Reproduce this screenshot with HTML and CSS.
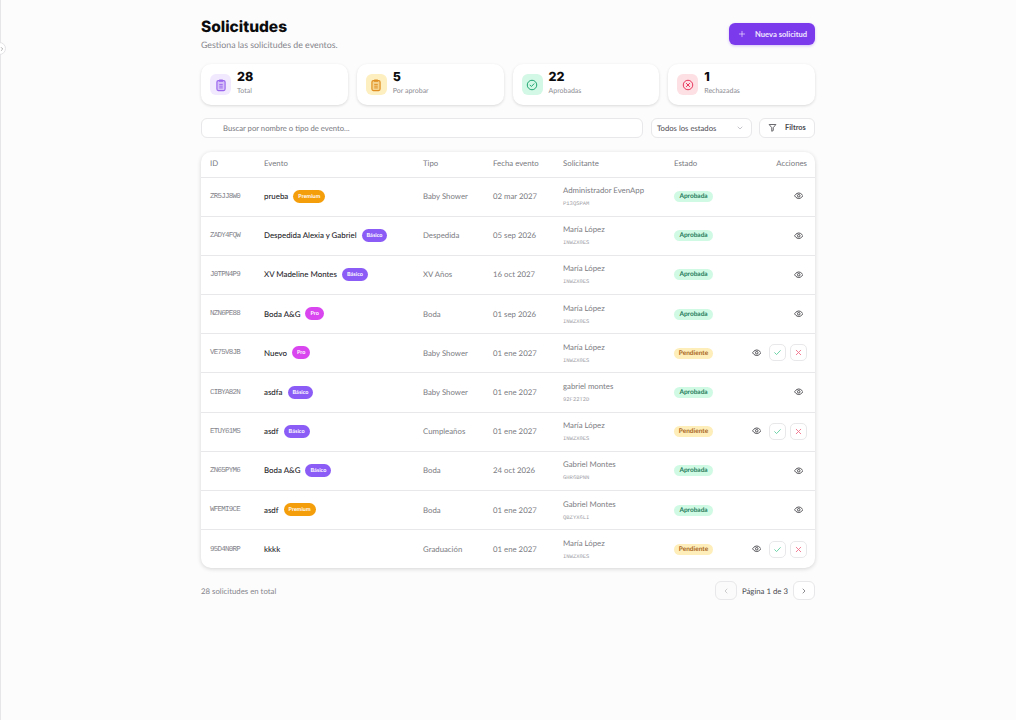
FILE: index.html
```html
<!DOCTYPE html>
<html lang="es">
<head>
    <meta charset="UTF-8">
    <meta name="viewport" content="width=device-width, initial-scale=1.0">
    <title>Solicitudes</title>
    <link rel="stylesheet" href="styles.css">
</head>
<body>
    <svg class="sprites" width="0" height="0" aria-hidden="true">
        <symbol id="i-clipboard" viewBox="0 0 24 24">
            <rect x="5" y="4.500" width="14" height="17" rx="2.500" fill="currentColor" fill-opacity=".3" stroke="currentColor" stroke-width="2"/>
            <rect x="8.500" y="2.500" width="7" height="4" rx="1" fill="currentColor"/>
            <path d="M9 11h6M9 14h6M9 17h6" fill="none" stroke="currentColor" stroke-width="1.600"/>
        </symbol>
        <symbol id="i-check-circle" viewBox="0 0 24 24">
            <circle cx="12" cy="12" r="9.500" fill="none" stroke="currentColor" stroke-width="2"/>
            <path d="M8 12.200l2.800 2.800L16 9.600" fill="none" stroke="currentColor" stroke-width="2" stroke-linecap="round" stroke-linejoin="round"/>
        </symbol>
        <symbol id="i-x-circle" viewBox="0 0 24 24">
            <circle cx="12" cy="12" r="9.500" fill="none" stroke="currentColor" stroke-width="2"/>
            <path d="M8.800 8.800l6.400 6.400M15.200 8.800l-6.400 6.400" fill="none" stroke="currentColor" stroke-width="2" stroke-linecap="round"/>
        </symbol>
        <symbol id="i-eye" viewBox="0 0 24 24">
            <path d="M1.500 12S5.500 5 12 5s10.500 7 10.500 7-4 7-10.500 7S1.500 12 1.500 12z" fill="none" stroke="currentColor" stroke-width="2.400" stroke-linejoin="round"/>
            <circle cx="12" cy="12" r="3.200" fill="none" stroke="currentColor" stroke-width="2.400"/>
        </symbol>
        <symbol id="i-check" viewBox="0 0 24 24">
            <path d="M4.500 12.500l5 5L19.500 7" fill="none" stroke="currentColor" stroke-width="2.400" stroke-linecap="round" stroke-linejoin="round"/>
        </symbol>
        <symbol id="i-x" viewBox="0 0 24 24">
            <path d="M6 6l12 12M18 6L6 18" fill="none" stroke="currentColor" stroke-width="2.400" stroke-linecap="round"/>
        </symbol>
        <symbol id="i-plus" viewBox="0 0 24 24">
            <path d="M12 4v16M4 12h16" fill="none" stroke="currentColor" stroke-width="2" stroke-linecap="round"/>
        </symbol>
        <symbol id="i-filter" viewBox="0 0 24 24">
            <path d="M3 4h18l-7 8.500V20l-4 2v-9.500z" fill="none" stroke="currentColor" stroke-width="2.200" stroke-linejoin="round"/>
        </symbol>
        <symbol id="i-down" viewBox="0 0 24 24">
            <path d="M6 9l6 6 6-6" fill="none" stroke="currentColor" stroke-width="2" stroke-linecap="round" stroke-linejoin="round"/>
        </symbol>
        <symbol id="i-left" viewBox="0 0 24 24">
            <path d="M15 6l-6 6 6 6" fill="none" stroke="currentColor" stroke-width="2" stroke-linecap="round" stroke-linejoin="round"/>
        </symbol>
        <symbol id="i-right" viewBox="0 0 24 24">
            <path d="M9 6l6 6-6 6" fill="none" stroke="currentColor" stroke-width="2" stroke-linecap="round" stroke-linejoin="round"/>
        </symbol>
    </svg>

    <div class="sidebar-edge">
        <button class="collapse-btn" type="button" aria-label="Expandir menú">
            <svg class="icon-collapse"><use href="#i-right"/></svg>
        </button>
    </div>

    <main class="page">
        <header class="page-head">
            <div>
                <h1>Solicitudes</h1>
                <p class="subtitle">Gestiona las solicitudes de eventos.</p>
            </div>
            <button class="btn-primary" type="button">
                <svg class="icon-plus"><use href="#i-plus"/></svg>
                Nueva solicitud
            </button>
        </header>

        <section class="stats">
            <div class="stat-card">
                <div class="stat-icon purple"><svg><use href="#i-clipboard"/></svg></div>
                <div><div class="stat-value">28</div><div class="stat-label">Total</div></div>
            </div>
            <div class="stat-card">
                <div class="stat-icon amber"><svg><use href="#i-clipboard"/></svg></div>
                <div><div class="stat-value">5</div><div class="stat-label">Por aprobar</div></div>
            </div>
            <div class="stat-card">
                <div class="stat-icon green"><svg><use href="#i-check-circle"/></svg></div>
                <div><div class="stat-value">22</div><div class="stat-label">Aprobadas</div></div>
            </div>
            <div class="stat-card">
                <div class="stat-icon red"><svg><use href="#i-x-circle"/></svg></div>
                <div><div class="stat-value">1</div><div class="stat-label">Rechazadas</div></div>
            </div>
        </section>

        <section class="toolbar">
            <div class="search">Buscar por nombre o tipo de evento...</div>
            <div class="select">Todos los estados <svg class="icon-down"><use href="#i-down"/></svg></div>
            <button class="btn-filter" type="button"><svg class="icon-filter"><use href="#i-filter"/></svg> Filtros</button>
        </section>

        <section class="table-card">
            <table>
                <colgroup>
                    <col class="c-id"><col class="c-event"><col class="c-type"><col class="c-date"><col class="c-user"><col class="c-status"><col class="c-actions">
                </colgroup>
                <thead>
                    <tr><th>ID</th><th>Evento</th><th>Tipo</th><th>Fecha evento</th><th>Solicitante</th><th>Estado</th><th class="right">Acciones</th></tr>
                </thead>
                <tbody>
                    <tr>
                        <td class="mono">ZR5JJ8W0</td>
                        <td><div class="event-row"><span class="event">prueba</span><span class="plan premium">Premium</span></div></td>
                        <td>Baby Shower</td><td>02 mar 2027</td>
                        <td><div class="user-name">Administrador EvenApp</div><div class="user-id">P13QSPAM</div></td>
                        <td><span class="status ok">Aprobada</span></td>
                        <td><div class="actions"><span class="act-eye"><svg><use href="#i-eye"/></svg></span></div></td>
                    </tr>
                    <tr>
                        <td class="mono">ZADY4FQW</td>
                        <td><div class="event-row"><span class="event">Despedida Alexia y Gabriel</span><span class="plan basico">Básico</span></div></td>
                        <td>Despedida</td><td>05 sep 2026</td>
                        <td><div class="user-name">María López</div><div class="user-id">INWZX0ES</div></td>
                        <td><span class="status ok">Aprobada</span></td>
                        <td><div class="actions"><span class="act-eye"><svg><use href="#i-eye"/></svg></span></div></td>
                    </tr>
                    <tr>
                        <td class="mono">J0TPN4P9</td>
                        <td><div class="event-row"><span class="event">XV Madeline Montes</span><span class="plan basico">Básico</span></div></td>
                        <td>XV Años</td><td>16 oct 2027</td>
                        <td><div class="user-name">María López</div><div class="user-id">INWZX0ES</div></td>
                        <td><span class="status ok">Aprobada</span></td>
                        <td><div class="actions"><span class="act-eye"><svg><use href="#i-eye"/></svg></span></div></td>
                    </tr>
                    <tr>
                        <td class="mono">NZN6PE88</td>
                        <td><div class="event-row"><span class="event">Boda A&amp;G</span><span class="plan pro">Pro</span></div></td>
                        <td>Boda</td><td>01 sep 2026</td>
                        <td><div class="user-name">María López</div><div class="user-id">INWZX0ES</div></td>
                        <td><span class="status ok">Aprobada</span></td>
                        <td><div class="actions"><span class="act-eye"><svg><use href="#i-eye"/></svg></span></div></td>
                    </tr>
                    <tr>
                        <td class="mono">VE75V8JB</td>
                        <td><div class="event-row"><span class="event">Nuevo</span><span class="plan pro">Pro</span></div></td>
                        <td>Baby Shower</td><td>01 ene 2027</td>
                        <td><div class="user-name">María López</div><div class="user-id">INWZX0ES</div></td>
                        <td><span class="status wait">Pendiente</span></td>
                        <td><div class="actions"><span class="act-eye"><svg><use href="#i-eye"/></svg></span><span class="act-btn yes"><svg><use href="#i-check"/></svg></span><span class="act-btn no"><svg><use href="#i-x"/></svg></span></div></td>
                    </tr>
                    <tr>
                        <td class="mono">CIBYA82N</td>
                        <td><div class="event-row"><span class="event">asdfa</span><span class="plan basico">Básico</span></div></td>
                        <td>Baby Shower</td><td>01 ene 2027</td>
                        <td><div class="user-name">gabriel montes</div><div class="user-id">92F22T2D</div></td>
                        <td><span class="status ok">Aprobada</span></td>
                        <td><div class="actions"><span class="act-eye"><svg><use href="#i-eye"/></svg></span></div></td>
                    </tr>
                    <tr>
                        <td class="mono">ETUY61MS</td>
                        <td><div class="event-row"><span class="event">asdf</span><span class="plan basico">Básico</span></div></td>
                        <td>Cumpleaños</td><td>01 ene 2027</td>
                        <td><div class="user-name">María López</div><div class="user-id">INWZX0ES</div></td>
                        <td><span class="status wait">Pendiente</span></td>
                        <td><div class="actions"><span class="act-eye"><svg><use href="#i-eye"/></svg></span><span class="act-btn yes"><svg><use href="#i-check"/></svg></span><span class="act-btn no"><svg><use href="#i-x"/></svg></span></div></td>
                    </tr>
                    <tr>
                        <td class="mono">ZN65PYM6</td>
                        <td><div class="event-row"><span class="event">Boda A&amp;G</span><span class="plan basico">Básico</span></div></td>
                        <td>Boda</td><td>24 oct 2026</td>
                        <td><div class="user-name">Gabriel Montes</div><div class="user-id">GHR6BPNN</div></td>
                        <td><span class="status ok">Aprobada</span></td>
                        <td><div class="actions"><span class="act-eye"><svg><use href="#i-eye"/></svg></span></div></td>
                    </tr>
                    <tr>
                        <td class="mono">WFEMI9CE</td>
                        <td><div class="event-row"><span class="event">asdf</span><span class="plan premium">Premium</span></div></td>
                        <td>Boda</td><td>01 ene 2027</td>
                        <td><div class="user-name">Gabriel Montes</div><div class="user-id">QBZYX6LI</div></td>
                        <td><span class="status ok">Aprobada</span></td>
                        <td><div class="actions"><span class="act-eye"><svg><use href="#i-eye"/></svg></span></div></td>
                    </tr>
                    <tr>
                        <td class="mono">95D4N0RP</td>
                        <td><div class="event-row"><span class="event">kkkk</span></div></td>
                        <td>Graduación</td><td>01 ene 2027</td>
                        <td><div class="user-name">María López</div><div class="user-id">INWZX0ES</div></td>
                        <td><span class="status wait">Pendiente</span></td>
                        <td><div class="actions"><span class="act-eye"><svg><use href="#i-eye"/></svg></span><span class="act-btn yes"><svg><use href="#i-check"/></svg></span><span class="act-btn no"><svg><use href="#i-x"/></svg></span></div></td>
                    </tr>
                </tbody>
            </table>
        </section>

        <footer class="table-foot">
            <span>28 solicitudes en total</span>
            <div class="pager">
                <span class="page-btn off"><svg><use href="#i-left"/></svg></span>
                <span class="page-text">Página 1 de 3</span>
                <span class="page-btn"><svg><use href="#i-right"/></svg></span>
            </div>
        </footer>
    </main>
</body>
</html>
```

FILE: styles.css
```css
* {
    box-sizing: border-box;
}
body {
    margin: 0;
    min-height: 720px;
    background-color: #fcfcfc;
    font-family: "Lato", "Noto Sans", sans-serif;
    color: #1f2023;
    text-rendering: geometricPrecision;
}
.sprites {
    position: absolute;
}
.sidebar-edge {
    position: fixed;
    top: 0;
    bottom: 0;
    left: 0;
    width: 1px;
    background-color: #e6e6e8;
}
.collapse-btn {
    position: absolute;
    top: 42px;
    left: -7px;
    width: 13px;
    height: 13px;
    padding: 0;
    display: flex;
    align-items: center;
    justify-content: flex-end;
    background-color: #fff;
    border: 1px solid #e3e3e6;
    border-radius: 50%;
}
.icon-collapse {
    width: 6px;
    height: 6px;
    color: #666;
}
.page {
    width: 614px;
    margin: 0 auto;
    padding-top: 17px;
}

/* header */
.page-head {
    display: flex;
    justify-content: space-between;
    align-items: flex-start;
    height: 47px;
}
h1 {
    margin: 0;
    font-family: "Inter", sans-serif;
    font-size: 15.500px;
    line-height: 19px;
    font-weight: 800;
    color: #0c0c0f;
}
.subtitle {
    margin: 2px 0 0;
    font-size: 8.800px;
    line-height: 13px;
    color: #85858c;
}
.btn-primary {
    margin-top: 6px;
    width: 86px;
    height: 22px;
    display: flex;
    align-items: center;
    padding: 0 0 0 9px;
    background-color: #7c3aed;
    color: #f1e9ff;
    border: none;
    border-radius: 6px;
    font-family: inherit;
    font-size: 7.600px;
    font-weight: 700;
    white-space: nowrap;
    box-shadow: 0 1px 3px rgba(124, 58, 237, .3);
}
.icon-plus {
    width: 8px;
    height: 8px;
    margin-right: 9px;
}

/* stat cards */
.stats {
    display: flex;
    gap: 9px;
}
.stat-card {
    flex: 1;
    height: 41px;
    display: flex;
    align-items: center;
    gap: 6px;
    padding-left: 9px;
    background-color: #fff;
    border-radius: 10px;
    box-shadow: 0 1px 3px rgba(0, 0, 0, .14);
}
.stat-icon {
    width: 21px;
    height: 21px;
    display: flex;
    align-items: center;
    justify-content: center;
    border-radius: 6px;
}
.stat-icon svg {
    width: 12px;
    height: 12px;
}
.stat-icon.purple svg,
.stat-icon.amber svg {
    width: 14px;
    height: 14px;
}
.purple {
    background-color: #f1e9fe;
    color: #9a66ee;
}
.amber {
    background-color: #fdefbf;
    color: #e08f22;
}
.green {
    background-color: #d3f8e5;
    color: #22a673;
}
.red {
    background-color: #fde0e4;
    color: #e8365d;
}
.stat-value {
    font-family: "Inter", sans-serif;
    font-size: 12.500px;
    line-height: 14px;
    font-weight: 800;
    color: #0c0c0f;
    margin-top: -2px;
}
.stat-label {
    margin-top: 2px;
    font-size: 7px;
    line-height: 9px;
    color: #8c8c93;
}

/* search and filters */
.toolbar {
    display: flex;
    gap: 7.500px;
    margin-top: 13px;
    height: 20px;
}
.search,
.select,
.btn-filter {
    height: 20px;
    display: flex;
    align-items: center;
    background-color: #fff;
    border: 1px solid #e8e8ea;
    border-radius: 6px;
    font-family: inherit;
    font-size: 7.700px;
}
.search {
    flex: 1;
    padding-left: 21px;
    color: #77777e;
}
.select {
    width: 101px;
    flex: none;
    padding: 0 7px 1px 5.500px;
    justify-content: space-between;
    color: #4a4a50;
}
.icon-down {
    width: 8px;
    height: 8px;
    color: #a9a9af;
}
.btn-filter {
    width: 56px;
    flex: none;
    padding: 0 0 1px 8px;
    gap: 8px;
    color: #4a4a50;
    font-size: 7.400px;
    font-weight: 700;
}
.icon-filter {
    width: 9px;
    height: 9px;
    color: #4a4a50;
}

/* table */
.table-card {
    margin-top: 14px;
    height: 416px;
    background-color: #fff;
    border-radius: 10px;
    box-shadow: 0 1px 4px rgba(0, 0, 0, .16);
    overflow: hidden;
}
table {
    width: 100%;
    border-collapse: collapse;
    table-layout: fixed;
    font-size: 7.800px;
}
.c-id { width: 54px; }
.c-event { width: 159px; }
.c-type { width: 70px; }
.c-date { width: 70px; }
.c-user { width: 111px; }
.c-status { width: 60px; }
th {
    height: 25px;
    padding: 0 8px 2px 9px;
    text-align: left;
    font-weight: 400;
    color: #77777e;
    border-bottom: 1px solid #e8e8ea;
}
th.right {
    text-align: right;
}
td {
    height: 39.200px;
    padding: 0 8px 1px 9px;
    color: #7b7b82;
    border-bottom: 1px solid #e8e8ea;
    white-space: nowrap;
}
tbody tr:last-child td {
    border-bottom: none;
}
td.mono {
    padding-bottom: 0;
    font-family: "Liberation Mono", monospace;
    font-size: 7.500px;
    letter-spacing: -.750px;
    color: #85858c;
}
.event-row {
    display: flex;
    align-items: center;
    gap: 5px;
}
.event {
    color: #26262b;
    font-size: 7.900px;
    font-weight: 500;
}
.plan {
    padding: 0 5px;
    height: 13px;
    line-height: 14px;
    border-radius: 7px;
    color: #fff;
    font-size: 5.500px;
    font-weight: 700;
}
.basico {
    background-color: #8b5cf6;
}
.premium {
    background-color: #f59e0b;
}
.pro {
    background-color: #d946ef;
}
.user-name {
    line-height: 10px;
}
.user-id {
    margin-top: 5px;
    font-family: "Liberation Mono", monospace;
    font-size: 5.500px;
    line-height: 7px;
    color: #a1a1a7;
}
.status {
    display: inline-block;
    width: 39px;
    height: 11px;
    line-height: 11px;
    text-align: center;
    border-radius: 6px;
    font-size: 6.500px;
    font-weight: 700;
}
.ok {
    background-color: #d1fae5;
    color: #1f7a5a;
}
.wait {
    background-color: #fdeeba;
    color: #a8641c;
}
.actions {
    display: flex;
    justify-content: flex-end;
    align-items: center;
    gap: 4px;
}
.act-eye {
    width: 17px;
    height: 17px;
    display: flex;
    align-items: center;
    justify-content: center;
    color: #4b4b50;
}
.act-eye svg {
    width: 9.500px;
    height: 9.500px;
}
.act-btn {
    width: 17px;
    height: 17px;
    display: flex;
    align-items: center;
    justify-content: center;
    border: 1px solid #e8e8ea;
    border-radius: 5px;
    background-color: #fff;
}
.act-btn svg {
    width: 9px;
    height: 9px;
}
.yes {
    color: #5fcf9f;
}
.no {
    color: #f0708a;
}

/* footer */
.table-foot {
    display: flex;
    justify-content: space-between;
    align-items: center;
    margin-top: 13px;
    font-size: 7.800px;
    color: #85858c;
}
.pager {
    display: flex;
    align-items: center;
    gap: 5px;
}
.page-text {
    color: #4a4a50;
}
.page-btn {
    width: 22px;
    height: 19px;
    display: flex;
    align-items: center;
    justify-content: center;
    background-color: #fff;
    border: 1px solid #e8e8ea;
    border-radius: 6px;
    color: #55555b;
}
.page-btn svg {
    width: 8px;
    height: 8px;
}
.off {
    background-color: #fbfbfb;
    color: #b5b5ba;
}
```
